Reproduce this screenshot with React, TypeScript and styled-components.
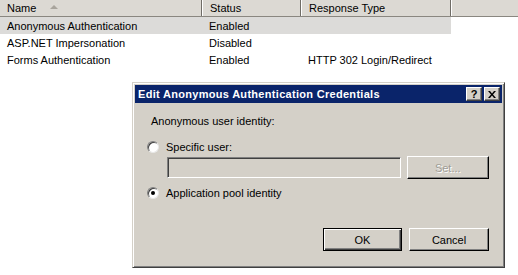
import styled, { createGlobalStyle } from 'styled-components'

const GlobalStyle = createGlobalStyle`
	html, body {
		margin: 0;
		padding: 0;
		background: #ffffff;
	}
	body {
		font-family: 'Liberation Sans', Arial, sans-serif;
		font-size: 11px;
		color: #000000;
	}
`

const Page = styled.div`
	position: relative;
	width: 518px;
	height: 275px;
	overflow: hidden;
	background: #ffffff;
`

const ListView = styled.div`
	display: flex;
	flex-direction: column;
`

const HeaderRow = styled.div`
	display: grid;
	grid-template-columns: 202px 99px 150px 1fr;
	height: 17px;
	background: #dcd9d3;
	border-bottom: 1px solid #8a8780;
	box-sizing: border-box;
`

const HeaderCell = styled.div<{ $first?: boolean; $last?: boolean }>`
	display: flex;
	align-items: center;
	gap: 14px;
	padding-left: 7px;
	border-left: ${(p) => (p.$first ? 'none' : '1px solid #ffffff')};
	border-right: ${(p) => (p.$last ? 'none' : '1px solid #6f6c66')};
	box-sizing: border-box;
	white-space: nowrap;
`

const SortArrow = styled.span`
	width: 0;
	height: 0;
	border-left: 4px solid transparent;
	border-right: 4px solid transparent;
	border-bottom: 4px solid #a8a49c;
	margin-top: -2px;
`

const Row = styled.div<{ $selected?: boolean }>`
	display: grid;
	grid-template-columns: 202px 99px 150px;
	width: 451px;
	height: 17px;
	align-items: center;
	background: ${(p) => (p.$selected ? '#dcdbd9' : 'transparent')};
`

const Cell = styled.div`
	padding-left: 7px;
	white-space: nowrap;
`

const Dialog = styled.div`
	position: absolute;
	left: 132px;
	top: 82px;
	width: 373px;
	height: 186px;
	box-sizing: border-box;
	background: #d4d0c8;
	border-top: 1px solid #d4d0c8;
	border-left: 1px solid #d4d0c8;
	border-right: 1px solid #404040;
	border-bottom: 1px solid #404040;
	box-shadow: inset 1px 1px 0 #ffffff, inset -1px -1px 0 #808080;
	padding: 2px;
	display: flex;
	flex-direction: column;
`

const TitleBar = styled.div`
	height: 18px;
	background: #0a246a;
	display: flex;
	align-items: center;
	justify-content: space-between;
	padding: 0 2px 0 3px;
`

const Title = styled.span`
	color: #ffffff;
	font-weight: bold;
	font-size: 11px;
	letter-spacing: 0.3px;
`

const TitleButtons = styled.div`
	display: flex;
	gap: 2px;
`

const CaptionButton = styled.div`
	width: 16px;
	height: 14px;
	box-sizing: border-box;
	background: #d4d0c8;
	border-top: 1px solid #ffffff;
	border-left: 1px solid #ffffff;
	border-right: 1px solid #404040;
	border-bottom: 1px solid #404040;
	box-shadow: inset -1px -1px 0 #808080;
	display: flex;
	align-items: center;
	justify-content: center;
	font-weight: bold;
	font-size: 11px;
	line-height: 1;
`

const Body = styled.div`
	flex: 1;
	display: flex;
	flex-direction: column;
	padding: 11px 13px 0 12px;
`

const Label = styled.div<{ $gap?: number }>`
	padding-left: 4px;
	height: 15px;
	line-height: 15px;
	margin-bottom: 10px;
`

const RadioRow = styled.label<{ $gap?: number }>`
	display: flex;
	align-items: center;
	gap: 7px;
	height: 16px;
	margin-top: ${(p) => p.$gap ?? 0}px;
`

const Radio = styled.span<{ $checked?: boolean }>`
	width: 12px;
	height: 12px;
	box-sizing: border-box;
	border-radius: 50%;
	background: #ffffff;
	border: 1px solid #808080;
	border-right-color: #e8e8e8;
	border-bottom-color: #e8e8e8;
	box-shadow: inset 1px 1px 0 #404040;
	display: flex;
	align-items: center;
	justify-content: center;
	&::after {
		content: '';
		width: 4px;
		height: 4px;
		border-radius: 50%;
		background: ${(p) => (p.$checked ? '#000000' : 'transparent')};
	}
`

const InputRow = styled.div`
	display: flex;
	gap: 6px;
	align-items: center;
	padding-left: 20px;
	margin-top: 1px;
`

const TextBox = styled.div`
	width: 235px;
	height: 21px;
	box-sizing: border-box;
	background: #d4d0c8;
	border-top: 1px solid #808080;
	border-left: 1px solid #808080;
	border-right: 1px solid #ffffff;
	border-bottom: 1px solid #ffffff;
	box-shadow: inset 1px 1px 0 #404040;
`

const Button = styled.div<{ $default?: boolean; $disabled?: boolean; $width?: number }>`
	width: ${(p) => p.$width ?? 80}px;
	height: 23px;
	box-sizing: border-box;
	display: flex;
	align-items: center;
	justify-content: center;
	background: #d4d0c8;
	border-top: 1px solid ${(p) => (p.$default ? '#000000' : '#ffffff')};
	border-left: 1px solid ${(p) => (p.$default ? '#000000' : '#ffffff')};
	border-right: 1px solid #000000;
	border-bottom: 1px solid #000000;
	box-shadow: ${(p) =>
		p.$default
			? 'inset 1px 1px 0 #ffffff, inset -1px -1px 0 #404040, inset -2px -2px 0 #808080'
			: 'inset -1px -1px 0 #808080'};
	color: ${(p) => (p.$disabled ? '#a09d96' : '#000000')};
	text-shadow: ${(p) => (p.$disabled ? '1px 1px 0 #ffffff' : 'none')};
`

const Footer = styled.div`
	margin-top: auto;
	display: flex;
	justify-content: flex-end;
	gap: 7px;
	padding-bottom: 14px;
`

const rows = [
	{ name: 'Anonymous Authentication', status: 'Enabled', response: '', selected: true },
	{ name: 'ASP.NET Impersonation', status: 'Disabled', response: '' },
	{ name: 'Forms Authentication', status: 'Enabled', response: 'HTTP 302 Login/Redirect' },
]

const App = () => {
	return (
		<>
			<GlobalStyle />
			<Page>
				<ListView>
					<HeaderRow>
						<HeaderCell $first>
							Name <SortArrow />
						</HeaderCell>
						<HeaderCell>Status</HeaderCell>
						<HeaderCell>Response Type</HeaderCell>
						<HeaderCell $last />
					</HeaderRow>
					{rows.map((r) => (
						<Row key={r.name} $selected={r.selected}>
							<Cell>{r.name}</Cell>
							<Cell>{r.status}</Cell>
							<Cell>{r.response}</Cell>
						</Row>
					))}
				</ListView>

				<Dialog>
					<TitleBar>
						<Title>Edit Anonymous Authentication Credentials</Title>
						<TitleButtons>
							<CaptionButton>?</CaptionButton>
							<CaptionButton>
								<svg width='8' height='7' viewBox='0 0 8 7'>
									<path d='M0 0h2l2 2.5L6 0h2L5 3.5 8 7H6L4 4.5 2 7H0l3-3.5z' fill='#000' />
								</svg>
							</CaptionButton>
						</TitleButtons>
					</TitleBar>
					<Body>
						<Label>Anonymous user identity:</Label>
						<RadioRow>
							<Radio />
							Specific user:
						</RadioRow>
						<InputRow>
							<TextBox />
							<Button $disabled $width={83}>
								Set...
							</Button>
						</InputRow>
						<RadioRow $gap={6}>
							<Radio $checked />
							Application pool identity
						</RadioRow>
						<Footer>
							<Button $default $width={79}>
								OK
							</Button>
							<Button>Cancel</Button>
						</Footer>
					</Body>
				</Dialog>
			</Page>
		</>
	)
}

export default App
